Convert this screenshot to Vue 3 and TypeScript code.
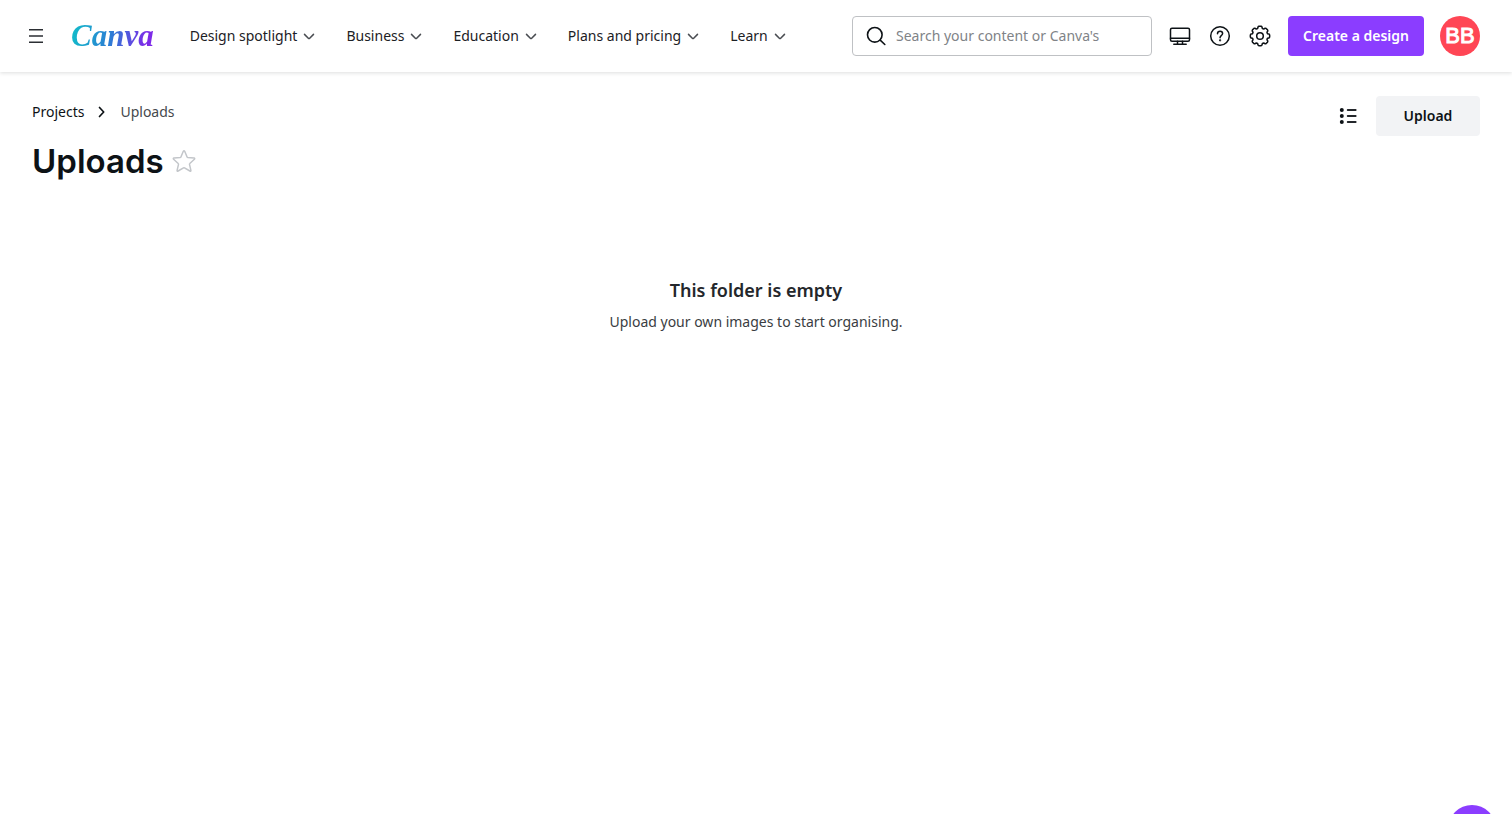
<script setup lang="ts">
import { ref } from 'vue'

interface NavItem {
  label: string
}

const navItems: NavItem[] = [
  { label: 'Design spotlight' },
  { label: 'Business' },
  { label: 'Education' },
  { label: 'Plans and pricing' },
  { label: 'Learn' },
]

const query = ref<string>('')
const starred = ref<boolean>(false)
const teeth: number[] = [0, 45, 90, 135, 180, 225, 270, 315]

function gearPath(): string {
  const point = (radius: number, degrees: number): string => {
    const a = (degrees * Math.PI) / 180
    return `${(12 + radius * Math.cos(a)).toFixed(2)} ${(12 + radius * Math.sin(a)).toFixed(2)}`
  }
  const parts = teeth.map((t, i) => {
    const start = i === 0 ? `M${point(7.9, t - 17)}` : `A2.6 2.6 0 0 0 ${point(7.9, t - 17)}`
    return `${start} L${point(9.1, t - 13)} Q${point(9.7, t - 10)} ${point(9.7, t - 6)} L${point(9.7, t + 6)} Q${point(9.7, t + 10)} ${point(9.1, t + 13)} L${point(7.9, t + 17)}`
  })
  return `${parts.join(' ')} A2.6 2.6 0 0 0 ${point(7.9, -17)} Z`
}
</script>

<template>
  <div class="page">
    <header class="topbar">
      <button class="icon-button" type="button" aria-label="Main menu">
        <svg width="24" height="24" viewBox="0 0 24 24" fill="none" stroke="#2b2e33" stroke-width="1.5">
          <path d="M5 5.75h14M5 12h14M5 18.25h14" />
        </svg>
      </button>
      <a class="logo" href="#">Canva</a>
      <nav class="nav" aria-label="Main">
        <button v-for="item in navItems" :key="item.label" class="nav-item" type="button">
          {{ item.label }}
          <svg width="12" height="12" viewBox="0 0 12 12" fill="none" stroke="#4a4d52" stroke-width="1.5" stroke-linecap="round" stroke-linejoin="round">
            <path d="M1.5 4.4 5.3 8.2q.7.6 1.4 0l3.8-3.8" />
          </svg>
        </button>
      </nav>
      <label class="search">
        <svg width="24" height="24" viewBox="0 0 24 24" fill="none" stroke="#0d1216" stroke-width="1.6" stroke-linecap="round">
          <circle cx="10.8" cy="10.8" r="7.3" />
          <path d="m16.2 16.2 4.6 4.3" />
        </svg>
        <input v-model="query" type="text" aria-label="Search" placeholder="Search your content or Canva's" />
      </label>
      <div class="tools">
        <button class="icon-button" type="button" aria-label="Desktop app">
          <svg width="24" height="24" viewBox="0 0 24 24" fill="none" stroke="#0d1216" stroke-width="1.5" stroke-linecap="round" stroke-linejoin="round">
            <rect x="2.5" y="4.2" width="19" height="13" rx="1.5" />
            <path d="M2.5 14.2h19M9.5 17.2v2.8M14.5 17.2v2.8M5.8 20.3h12.4" />
          </svg>
        </button>
        <button class="icon-button" type="button" aria-label="Help">
          <svg width="24" height="24" viewBox="0 0 24 24" fill="none" stroke="#0d1216" stroke-width="1.5" stroke-linecap="round" stroke-linejoin="round">
            <circle cx="12" cy="12" r="9.3" />
            <path d="M9.5 9.7c0-1.5 1.1-2.5 2.6-2.5s2.5 1 2.5 2.3c0 2-2.5 2.1-2.5 3.8v.4" />
            <circle cx="12.1" cy="16.3" r=".4" fill="#0d1216" />
          </svg>
        </button>
        <button class="icon-button" type="button" aria-label="Settings">
          <svg width="24" height="24" viewBox="0 0 24 24" fill="none" stroke="#0d1216" stroke-width="1.5" stroke-linejoin="round">
            <path :d="gearPath()" />
            <circle cx="12" cy="12" r="3.3" />
          </svg>
        </button>
      </div>
      <button class="create" type="button">Create a design</button>
      <button class="avatar" type="button" aria-label="Account">BB</button>
    </header>

    <main class="content">
      <div class="folder-head">
        <div>
          <nav class="crumbs" aria-label="Breadcrumb">
            <a href="#">Projects</a>
            <svg width="16" height="16" viewBox="0 0 16 16" fill="none" stroke="#0d1216" stroke-width="1.7" stroke-linecap="round" stroke-linejoin="round">
              <path d="m5.5 3.5 4.2 4.5-4.2 4.5" />
            </svg>
            <span>Uploads</span>
          </nav>
          <div class="title-row">
            <h1>Uploads</h1>
            <button class="icon-button" type="button" aria-label="Star this folder" :aria-pressed="starred" @click="starred = !starred">
              <svg width="24" height="24" viewBox="0 0 24 24" fill="none" stroke="#c3c6ca" stroke-width="1.5" stroke-linejoin="round">
                <path d="M11.3 2.3q.7-1.3 1.4 0l2.5 5.9q.2.4.6.4l6.2.5q1.2.3.4 1.2l-4.6 4.2q-.4.3-.3.8l1.4 6q.1 1.2-1 .7l-5.4-3.2q-.5-.3-1 0l-5.4 3.2q-1.1.5-1-.7l1.4-6q.1-.5-.3-.8l-4.6-4.2q-.8-.9.4-1.2l6.2-.5q.4 0 .6-.4z" />
              </svg>
            </button>
          </div>
        </div>
        <div class="actions">
          <button class="icon-button" type="button" aria-label="View as list">
            <svg width="24" height="24" viewBox="0 0 24 24" fill="none" stroke="#24272b" stroke-width="1.8" stroke-linecap="round">
              <path d="M11.7 6h8M11.7 12h8M11.7 18h8" />
              <g fill="#0d1216" stroke="none">
                <circle cx="5.8" cy="6" r="2" />
                <circle cx="5.8" cy="12" r="2" />
                <circle cx="5.8" cy="18" r="2" />
              </g>
            </svg>
          </button>
          <button class="upload" type="button">Upload</button>
        </div>
      </div>
      <section class="empty">
        <h2>This folder is empty</h2>
        <p>Upload your own images to start organising.</p>
      </section>
    </main>
    <button class="assistant" type="button" aria-label="Assistant"></button>
  </div>
</template>

<style>
body {
  margin: 0;
  background: #fff;
}
</style>

<style scoped>
.page {
  min-height: 100vh;
  color: #0d1216;
  font-family: "Noto Sans", sans-serif;
  font-size: 14px;
  line-height: 24px;
}

button,
input {
  padding: 0;
  border: 0;
  background: none;
  color: inherit;
  font: inherit;
}

button {
  cursor: pointer;
}

a {
  color: inherit;
  text-decoration: none;
}

svg {
  display: block;
  flex: none;
}

.topbar {
  display: flex;
  align-items: center;
  box-sizing: border-box;
  height: 72px;
  padding: 0 32px 0 24px;
  box-shadow: 0 1px 4px rgba(13, 18, 22, 0.14);
}

.icon-button {
  display: grid;
  place-items: center;
  flex: none;
  width: 24px;
  height: 24px;
}

.logo {
  flex: none;
  margin-left: 23px;
  padding-right: 4px;
  background: linear-gradient(100deg, #10c0c8 0%, #2b7fd4 45%, #7d2ae8 85%);
  background-clip: text;
  color: transparent;
  font-family: "Liberation Serif", serif;
  font-size: 31px;
  font-style: italic;
  font-weight: 700;
  line-height: 40px;
}

.nav {
  display: flex;
  flex: none;
  gap: 31px;
  margin-left: 32px;
}

.nav-item {
  display: flex;
  align-items: center;
  gap: 6px;
  color: #1c2125;
  white-space: nowrap;
}

.search {
  display: flex;
  align-items: center;
  gap: 8px;
  flex: 0 1 300px;
  box-sizing: border-box;
  min-width: 0;
  height: 40px;
  margin-left: auto;
  padding: 0 12px 0 11px;
  border: 1px solid #bfc1c4;
  border-radius: 4px;
}

.search input {
  flex: 1;
  min-width: 0;
  outline: 0;
}

.search input::placeholder {
  color: #808387;
  opacity: 1;
}

.tools {
  display: flex;
  flex: none;
  gap: 16px;
  margin: 0 16px;
}

.create,
.upload {
  flex: none;
  height: 40px;
  border-radius: 4px;
  font-weight: 600;
}

.create {
  padding: 0 15px;
  background: #8b3dff;
  color: #fff;
}

.avatar {
  flex: none;
  width: 40px;
  height: 40px;
  margin-left: 16px;
  border-radius: 50%;
  background: #ff4655;
  color: #fff;
  font-family: "Liberation Sans", sans-serif;
  font-size: 22px;
  -webkit-text-stroke: 1px #fff;
}

.content {
  padding: 24px 32px;
}

.folder-head {
  display: flex;
  justify-content: space-between;
  align-items: flex-start;
}

.crumbs {
  display: flex;
  align-items: center;
  gap: 10px;
  padding-top: 4px;
}

.crumbs span {
  color: #45494d;
}

.title-row {
  display: flex;
  align-items: center;
  gap: 8px;
  margin-top: 17px;
}

h1,
h2,
p {
  margin: 0;
}

h1 {
  font-family: Inter, sans-serif;
  font-size: 33px;
  font-weight: 600;
  line-height: 40px;
}

.actions {
  display: flex;
  align-items: center;
  gap: 16px;
}

.upload {
  width: 104px;
  background: #f2f3f5;
}

.empty {
  padding-top: 95px;
  color: #24272b;
  text-align: center;
}

h2 {
  font-size: 18px;
  font-weight: 600;
  line-height: 28px;
}

.empty p {
  margin-top: 6px;
  color: #3a3d42;
}

.assistant {
  position: fixed;
  right: 16px;
  bottom: -39px;
  width: 48px;
  height: 48px;
  border-radius: 50%;
  background: #8b3dff;
}
</style>
